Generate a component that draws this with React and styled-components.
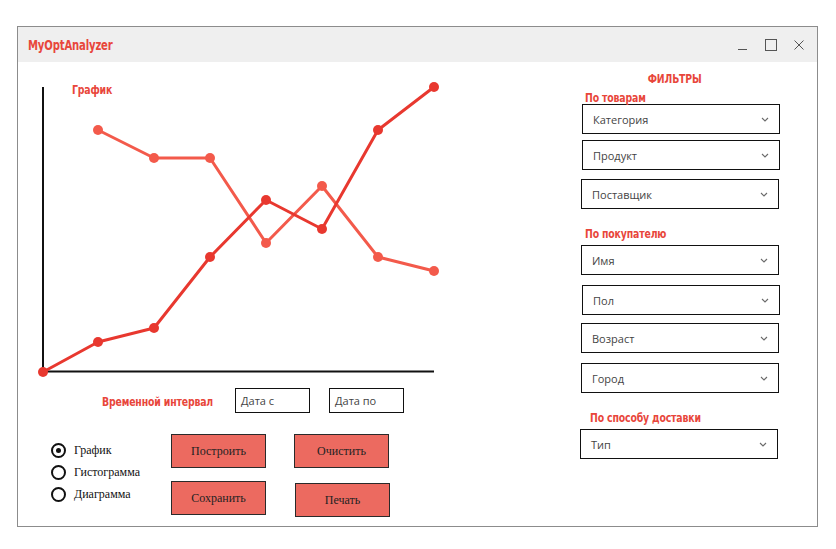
import React, { useState } from "react";
import styled, { createGlobalStyle } from "styled-components";

const GlobalStyle = createGlobalStyle`
    html, body {
        margin: 0;
        padding: 0;
        background: #ffffff;
    }
    * {
        box-sizing: border-box;
    }
`;

const RED = "#e8463b";

// narrow display face: condensed DejaVu squeezed a little more
const Narrow = styled.span`
    display: inline-block;
    font-family: "DejaVu Sans", sans-serif;
    font-stretch: condensed;
    font-weight: 700;
    font-size: ${(p) => p.size || "13px"};
    letter-spacing: -0.2px;
    color: ${RED};
    white-space: nowrap;
    transform: scaleX(0.8);
    transform-origin: ${(p) => p.origin || "left"} center;
`;

const Window = styled.div`
    margin: 26px 0 0 17px;
    width: 801px;
    height: 501px;
    border: 1px solid #8c8c8c;
    display: flex;
    flex-direction: column;
    background: #fff;
`;

const TitleBar = styled.div`
    height: 35px;
    background: #efefef;
    display: flex;
    align-items: center;
    justify-content: space-between;
    padding: 0 12px 0 10px;
`;

const WinControls = styled.div`
    display: flex;
    align-items: center;
    gap: 16px;
`;

const Body = styled.div`
    flex: 1;
    display: flex;
`;

const Left = styled.div`
    width: 563px;
    display: flex;
    flex-direction: column;
`;

const ChartArea = styled.div`
    position: relative;
    height: 318px;
`;

const ChartLabel = styled.div`
    position: absolute;
    left: 54px;
    top: 18px;
`;

const IntervalRow = styled.div`
    margin-top: 8px;
    padding-left: 84px;
    display: flex;
    align-items: center;
    height: 25px;
`;

const Heading = styled.div`
    width: ${(p) => p.w || "auto"};
    text-align: ${(p) => p.align || "left"};
    margin-top: ${(p) => p.mt || "0px"};
    padding-left: ${(p) => p.pl || "0px"};
    line-height: 15px;
    height: 15px;
`;

const DateInput = styled.div`
    width: 75px;
    height: 25px;
    border: 1px solid #111;
    margin-right: 19px;
    display: flex;
    align-items: center;
    padding-left: 5px;
    font-family: "Open Sans", sans-serif;
    font-size: 11px;
    color: #444;
`;

const ControlsRow = styled.div`
    margin-top: 21px;
    padding-left: 33px;
    display: flex;
`;

const RadioList = styled.div`
    width: 120px;
    padding-top: 9px;
    display: flex;
    flex-direction: column;
    gap: 7px;
`;

const RadioItem = styled.label`
    display: flex;
    align-items: center;
    gap: 8px;
    font-family: "Liberation Serif", serif;
    font-size: 12px;
    color: #111;
    height: 15px;
    cursor: pointer;
`;

const RadioDot = styled.span`
    width: 15px;
    height: 15px;
    border-radius: 50%;
    border: 2px solid #111;
    display: flex;
    align-items: center;
    justify-content: center;

    &::after {
        content: "";
        width: 5px;
        height: 5px;
        border-radius: 50%;
        background: #111;
        display: ${(p) => (p.checked ? "block" : "none")};
    }
`;

const ButtonGrid = styled.div`
    display: grid;
    grid-template-columns: 95px 95px;
    column-gap: 28px;
    row-gap: 13px;
`;

const ActionButton = styled.button`
    width: 95px;
    height: 34px;
    background: #ec6a60;
    border: 1px solid #2a2a2a;
    font-family: "Liberation Serif", serif;
    font-size: 12px;
    color: #222;
    margin-top: ${(p) => p.mt || "0px"};
    margin-left: ${(p) => p.ml || "0px"};
    cursor: pointer;
`;

const Right = styled.div`
    width: 210px;
    display: flex;
    flex-direction: column;
    padding-top: 8px;
`;

const SelectBox = styled.div`
    width: 198px;
    height: 30px;
    border: 1.5px solid #111;
    display: flex;
    align-items: center;
    justify-content: space-between;
    padding: 0 10px 0 10px;
    margin-top: ${(p) => p.mt || "0px"};
    margin-left: ${(p) => p.ml || "0px"};
    font-family: "Open Sans", sans-serif;
    font-size: 11px;
    color: #444;
`;

const Chevron = () => (
    <svg width="8" height="5" viewBox="0 0 8 5">
        <path d="M1 1 L4 4 L7 1" fill="none" stroke="#6a6a6a" strokeWidth="1.1" />
    </svg>
);

const Select = ({ label, mt, ml }) => (
    <SelectBox mt={mt} ml={ml}>
        <span>{label}</span>
        <Chevron />
    </SelectBox>
);

const rising = [
    [25, 310], [80, 280], [136, 266], [192, 195],
    [248, 138], [304, 167], [360, 68], [416, 25],
];
const falling = [
    [80, 68], [136, 96], [192, 96], [248, 181],
    [304, 124], [360, 195], [416, 209],
];

const Series = ({ points, color }) => (
    <g>
        <polyline
            points={points.map((p) => p.join(",")).join(" ")}
            fill="none"
            stroke={color}
            strokeWidth="3"
            strokeLinejoin="round"
        />
        {points.map(([x, y], i) => (
            <circle key={i} cx={x} cy={y} r="5" fill={color} />
        ))}
    </g>
);

const Chart = () => (
    <svg width="440" height="318" viewBox="0 0 440 318">
        <line x1="25" y1="25" x2="25" y2="311" stroke="#111" strokeWidth="2" />
        <line x1="24" y1="309.5" x2="416" y2="309.5" stroke="#111" strokeWidth="2" />
        <Series points={falling} color="#f35a4b" />
        <Series points={rising} color="#e8382f" />
    </svg>
);

const TitleControls = () => (
    <WinControls>
        <svg width="12" height="12" viewBox="0 0 12 12">
            <line x1="1" y1="10.5" x2="10" y2="10.5" stroke="#555" strokeWidth="1" />
        </svg>
        <svg width="12" height="12" viewBox="0 0 12 12">
            <rect x="0.5" y="0.5" width="11" height="11" fill="none" stroke="#555" strokeWidth="1" />
        </svg>
        <svg width="12" height="12" viewBox="0 0 12 12">
            <path d="M1.5 1.5 L10.5 10.5 M10.5 1.5 L1.5 10.5" stroke="#555" strokeWidth="1" />
        </svg>
    </WinControls>
);

const chartTypes = ["График", "Гистограмма", "Диаграмма"];

const App = () => {
    const [type, setType] = useState(0);

    return (
        <>
            <GlobalStyle />
            <Window>
                <TitleBar>
                    <Narrow size={"14px"}>MyOptAnalyzer</Narrow>
                    <TitleControls />
                </TitleBar>
                <Body>
                    <Left>
                        <ChartArea>
                            <ChartLabel>
                                <Narrow>График</Narrow>
                            </ChartLabel>
                            <Chart />
                        </ChartArea>
                        <IntervalRow>
                            <Heading w={"133px"}>
                                <Narrow>Временной интервал</Narrow>
                            </Heading>
                            <DateInput>Дата с</DateInput>
                            <DateInput>Дата по</DateInput>
                        </IntervalRow>
                        <ControlsRow>
                            <RadioList>
                                {chartTypes.map((t, i) => (
                                    <RadioItem key={t} onClick={() => setType(i)}>
                                        <RadioDot checked={type === i} />
                                        {t}
                                    </RadioItem>
                                ))}
                            </RadioList>
                            <ButtonGrid>
                                <ActionButton>Построить</ActionButton>
                                <ActionButton>Очистить</ActionButton>
                                <ActionButton>Сохранить</ActionButton>
                                <ActionButton mt={"2px"} ml={"1px"}>Печать</ActionButton>
                            </ButtonGrid>
                        </ControlsRow>
                    </Left>
                    <Right>
                        <Heading align={"center"} w={"188px"}>
                            <Narrow origin={"center"}>ФИЛЬТРЫ</Narrow>
                        </Heading>
                        <Heading pl={"4px"} mt={"4px"}>
                            <Narrow>По товарам</Narrow>
                        </Heading>
                        <Select label="Категория" ml={"1px"} />
                        <Select label="Продукт" mt={"6px"} ml={"1px"} />
                        <Select label="Поставщик" mt={"9px"} />
                        <Heading pl={"4px"} mt={"16px"}>
                            <Narrow>По покупателю</Narrow>
                        </Heading>
                        <Select label="Имя" mt={"5px"} />
                        <Select label="Пол" mt={"10px"} ml={"1px"} />
                        <Select label="Возраст" mt={"8px"} />
                        <Select label="Город" mt={"10px"} />
                        <Heading pl={"9px"} mt={"16px"}>
                            <Narrow>По способу доставки</Narrow>
                        </Heading>
                        <Select label="Тип" mt={"5px"} ml={"-1px"} />
                    </Right>
                </Body>
            </Window>
        </>
    );
};

export default App;
